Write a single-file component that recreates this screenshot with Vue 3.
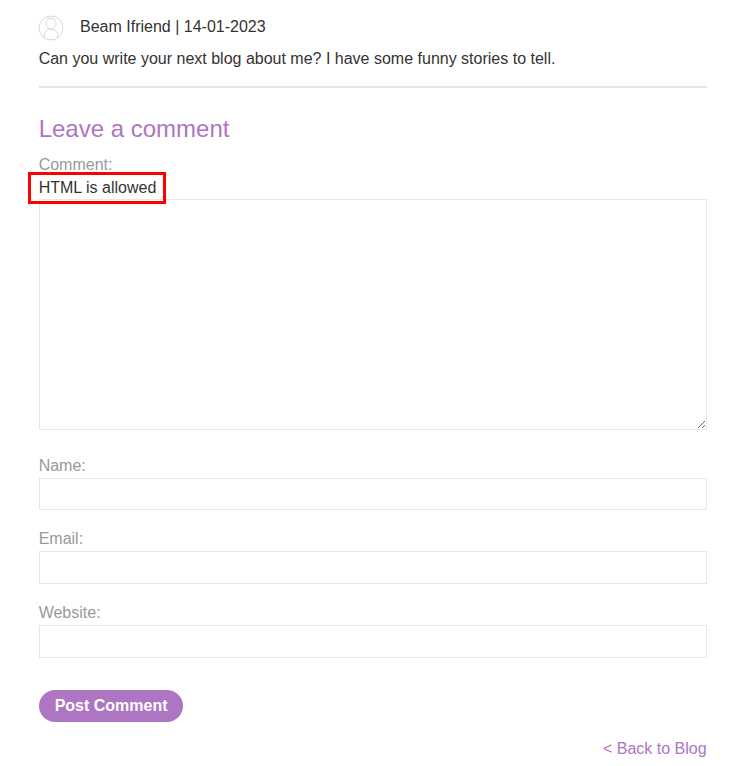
<template>
  <div class="blog-page">
    <section class="comment-list">
      <div class="comment-head">
        <svg class="avatar" width="26" height="26" viewBox="0 0 26 26" fill="none">
          <circle cx="13" cy="13" r="12" stroke="#d8d8d8" />
          <ellipse cx="13" cy="8.5" rx="5" ry="5.5" stroke="#d8d8d8" />
          <path d="M6.5 23v-3.5a5 5 0 0 1 5-5h3a5 5 0 0 1 5 5V23" stroke="#d8d8d8" />
        </svg>
        <span>Beam Ifriend | 14-01-2023</span>
      </div>
      <p class="comment-body">Can you write your next blog about me? I have some funny stories to tell.</p>
    </section>

    <hr class="divider" />

    <h2 class="form-title">Leave a comment</h2>

    <form class="comment-form" @submit.prevent>
      <label class="field-label first" for="comment">Comment:</label>
      <div class="hint-wrap">
        <span class="hint">HTML is allowed</span>
        <span class="highlight"></span>
      </div>
      <textarea id="comment" class="comment-box"></textarea>

      <div class="fields">
        <div v-for="field in fields" :key="field.id" class="field">
          <label class="field-label" :for="field.id">{{ field.label }}</label>
          <input :id="field.id" class="field-input" type="text" />
        </div>
      </div>

      <button class="post-btn" type="submit">Post Comment</button>
    </form>

    <div class="back-row">
      <a class="back-link" href="#">&lt; Back to Blog</a>
    </div>
  </div>
</template>

<script setup>
const fields = [
  { id: 'name', label: 'Name:' },
  { id: 'email', label: 'Email:' },
  { id: 'website', label: 'Website:' }
]
</script>

<style>
html,
body {
  margin: 0;
  background: #fff;
}
</style>

<style scoped>
.blog-page {
  box-sizing: border-box;
  width: 741px;
  height: 766px;
  overflow: hidden;
  padding: 15px 34px 0 38.67px;
  font-family: "Liberation Sans", Arial, sans-serif;
  font-size: 16px;
  line-height: 24px;
  color: #333332;
}

.comment-head {
  display: flex;
  align-items: center;
  gap: 16px;
  height: 24px;
  margin-bottom: 8px;
}

.avatar {
  flex: none;
  margin-top: 2px;
  margin-left: -0.67px;
}

.comment-body {
  margin: 0;
}

.divider {
  height: 2px;
  margin: 15px 0 0;
  border: 0;
  background: #e6e6e6;
}

.form-title {
  margin: 26px 0 0;
  font-size: 24px;
  line-height: 30px;
  font-weight: 400;
  color: #ae75c2;
}

.comment-form {
  display: flex;
  flex-direction: column;
  align-items: flex-start;
}

.field-label {
  display: block;
  height: 24px;
  color: #999;
}

.field-label.first {
  margin-top: 9px;
  height: 23px;
}

.hint-wrap {
  position: relative;
  height: 23px;
}

.hint {
  display: block;
  line-height: 23px;
}

.highlight {
  position: absolute;
  left: -11px;
  top: -4px;
  width: 138px;
  height: 32px;
  box-sizing: border-box;
  border: 3px solid #f00;
}

.comment-box {
  display: block;
  box-sizing: border-box;
  width: 668px;
  height: 231px;
  margin: 0;
  padding: 0;
  border: 1px solid #e6e6e6;
  background: #fff;
  outline: 0;
}

.fields {
  display: flex;
  flex-direction: column;
  gap: 16.8px;
  margin-top: 23.6px;
  width: 668px;
}

.field-input {
  display: block;
  box-sizing: border-box;
  width: 668px;
  height: 32.8px;
  margin: 0;
  padding: 0 8px;
  border: 1px solid #e6e6e6;
  background: #fff;
  outline: 0;
}

.post-btn {
  height: 32px;
  margin: 32.4px 0 0;
  padding: 0 15.4px 0 16px;
  border: 0;
  border-radius: 16px;
  background: #ae75c2;
  color: #fff;
  font: 700 16px/32px "Liberation Sans", Arial, sans-serif;
}

.back-row {
  margin-top: 15px;
  margin-right: 0.4px;
  text-align: right;
}

.back-link {
  color: #ae75c2;
  text-decoration: none;
}
</style>
